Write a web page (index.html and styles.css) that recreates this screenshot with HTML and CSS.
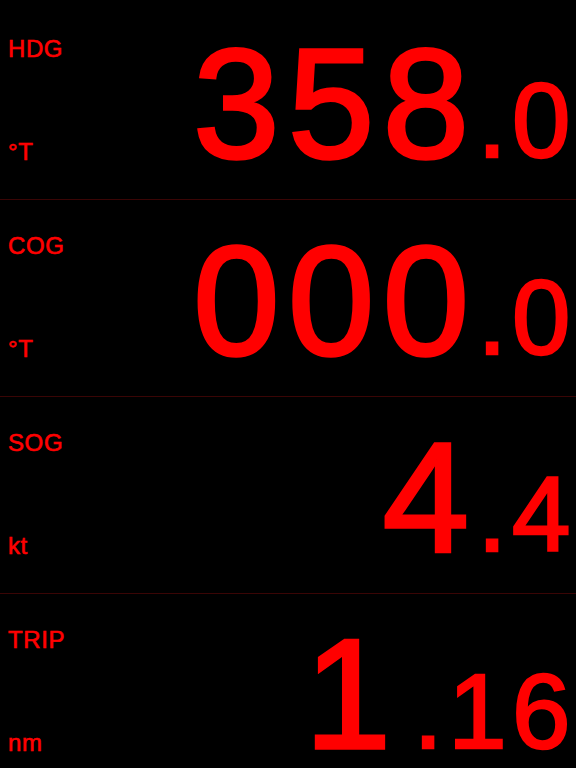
FILE: index.html
```html
<!DOCTYPE html>
<html lang="en">
  <head>
    <meta charset="UTF-8" />
    <meta name="viewport" content="width=device-width, initial-scale=1.0" />
    <title>Instruments</title>
    <link rel="stylesheet" href="styles.css">
  </head>
  <body>
    <div class="panel">
      <div class="row">
        <div class="labels">
          <div class="label">HDG</div>
          <div class="label">°T</div>
        </div>
        <div class="value">358<span class="frac">.0</span></div>
      </div>
      <div class="row">
        <div class="labels">
          <div class="label">COG</div>
          <div class="label">°T</div>
        </div>
        <div class="value">000<span class="frac">.0</span></div>
      </div>
      <div class="row">
        <div class="labels">
          <div class="label">SOG</div>
          <div class="label">kt</div>
        </div>
        <div class="value">4<span class="frac">.4</span></div>
      </div>
      <div class="row">
        <div class="labels">
          <div class="label">TRIP</div>
          <div class="label">nm</div>
        </div>
        <div class="value"><span class="int-one">1</span><span class="frac">.16</span></div>
      </div>
    </div>
  </body>
</html>
```

FILE: styles.css
```css
html,
body {
  margin: 0;
  height: 100%;
  background-color: #000;
  overflow: hidden;
}

body {
  font-family: "Liberation Sans", Arial, sans-serif;
  color: #ff0000;
  user-select: none;
}

.panel {
  padding-top: 3px;
}

.row {
  display: flex;
  justify-content: space-between;
  height: 196px;
  border-bottom: 1px solid #3a0505;
}

.labels {
  display: flex;
  flex-direction: column;
  justify-content: space-between;
  padding: 34px 0 35px 8px;
}

.label {
  font-size: 24px;
  letter-spacing: 0.6px;
  line-height: 1;
  -webkit-text-stroke: 0.6px #ff0000;
}

.value {
  padding-top: 36px;
  font-size: 155px;
  letter-spacing: 8.5px;
  line-height: 130px;
  white-space: nowrap;
  -webkit-text-stroke: 3.5px #ff0000;
}

/* the "1" glyph sits too far right next to the decimals */
.int-one {
  margin-right: 14px;
}

.frac {
  font-size: 105px;
  letter-spacing: 5.5px;
  line-height: 90px;
  -webkit-text-stroke: 2.5px #ff0000;
}
```
